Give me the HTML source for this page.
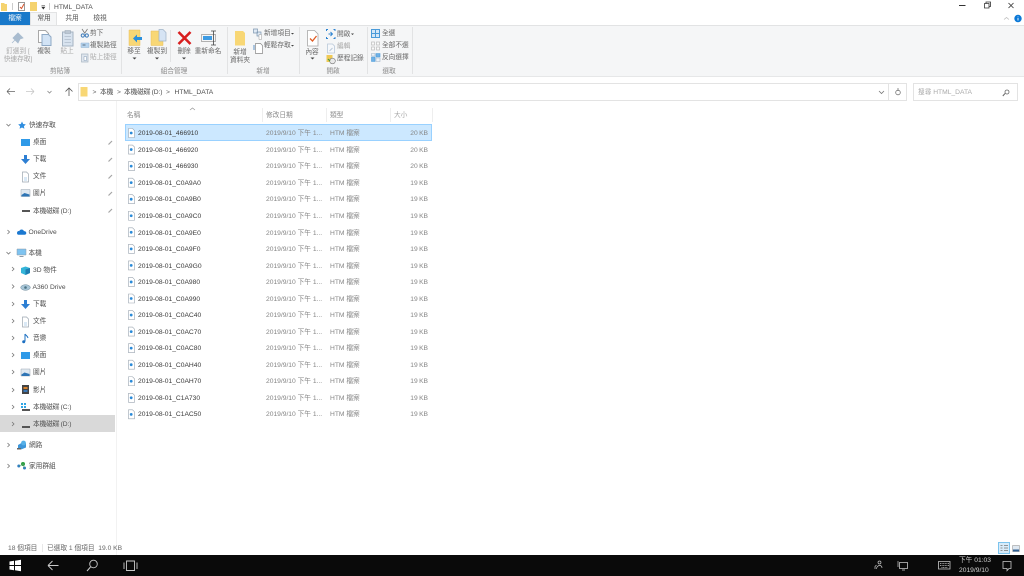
<!DOCTYPE html>
<html lang="zh-Hant"><head><meta charset="utf-8"><title>HTML_DATA</title>
<style>
html,body{margin:0;padding:0;background:#fff}
#p{position:relative;width:1024px;height:576px;overflow:hidden;background:#fff;font-family:"Liberation Sans","Noto Sans CJK TC",sans-serif;font-size:6.7px;color:#333;filter:blur(.3px)}
#p div{position:absolute}
.t{white-space:nowrap;line-height:10px;height:10px;margin-top:1px}
.c{transform:translateX(-50%)}
.g{color:#8a8a8a}
.m{color:#666}
.l{color:#a9a9a9}
.f{left:138px;color:#3a3a3a}
.d{left:266px;color:#858585}
.y{left:330px;color:#858585}
.s{left:398px;width:30px;text-align:right;color:#858585;word-spacing:-.5px}
.n{color:#4d4d4d}
.w{word-spacing:-.5px;letter-spacing:-.1px}
svg{position:absolute;overflow:visible}
</style></head><body><div id="p">

<!-- title bar -->
<svg style="left:0;top:0" width="60" height="12"><path d="M1 3h3l1 1h2v7H1z" fill="#f5d36f"/><path d="M12.500 3v7" stroke="#ccc"/><path d="M18.500 2.500h6v8h-6z" fill="#fff" stroke="#999"/><path d="M20 7l1.500 1.500L24 4" stroke="#d9552c" fill="none"/><path d="M30 2h7v9h-7z" fill="#f5d36f"/><path d="M41.500 5.500h3.500M41.800 7l1.500 2 1.500-2z" fill="#333" stroke="#333" stroke-width=".6"/><path d="M49.500 3v7" stroke="#ccc"/></svg>
<div class="t n" style="left:54px;top:1.500px">HTML_DATA</div>
<svg style="left:950px;top:0" width="74" height="12"><path d="M9 5.500h6.500" stroke="#333"/><path d="M34.500 3.500h4.500v4.500h-4.500zM36 3.500v-1.500h4.500v4.500h-1.500" fill="none" stroke="#333" stroke-width=".8"/><path d="M58.500 3l5 5M63.500 3l-5 5" stroke="#333" stroke-width=".8"/></svg>

<!-- tabs -->
<div style="left:0;top:12px;width:30px;height:13px;background:#1979ca"></div>
<div class="t c" style="left:15px;top:13px;color:#fff">檔案</div>
<div style="left:30px;top:12px;width:27px;height:14px;background:#f5f6f7;border:1px solid #e2e3e4;border-bottom:0;box-sizing:border-box"></div>
<div class="t c n" style="left:44px;top:13px">常用</div>
<div class="t c" style="left:72px;top:13px;color:#555">共用</div>
<div class="t c" style="left:100px;top:13px;color:#555">檢視</div>
<svg style="left:1000px;top:13px" width="22" height="10"><path d="M4 6.500l2.500-2L9 6.500" stroke="#bbb" fill="none" stroke-width=".8"/><circle cx="18" cy="5.500" r="3.700" fill="#0a78d7"/><path d="M18 3.500v.8M18 5V7.500" stroke="#fff" stroke-width=".9"/></svg>

<!-- ribbon -->
<div style="left:0;top:25px;width:1024px;height:52px;background:#f5f6f7;border-top:1px solid #e2e3e4;border-bottom:1px solid #e6e7e8;box-sizing:border-box"></div>
<div style="left:121px;top:27px;width:1px;height:47px;background:#e2e3e4"></div>
<div style="left:227px;top:27px;width:1px;height:47px;background:#e2e3e4"></div>
<div style="left:299px;top:27px;width:1px;height:47px;background:#e2e3e4"></div>
<div style="left:367px;top:27px;width:1px;height:47px;background:#e2e3e4"></div>
<div style="left:412px;top:27px;width:1px;height:47px;background:#e2e3e4"></div>
<div style="left:170px;top:30px;width:1px;height:32px;background:#e2e3e4"></div>

<svg style="left:0;top:25px" width="420" height="50">
<!-- pin -->
<path d="M13 13l5-5 5 5-3 1-2 4-4-4zM15 15l-3 3" fill="#a9bccf" stroke="#a9bccf" stroke-width=".8"/>
<!-- copy -->
<path d="M38.500 5.500h7l3 3v9h-10z" fill="#fff" stroke="#a8a8a8"/><path d="M42 9.500h6.500l2.500 2.500v8.500H42z" fill="#d2e3f5" stroke="#8fa9c5"/>
<!-- paste -->
<path d="M62.500 7h10.500v14H62.500z" fill="#d8e3ef" stroke="#a5b3c2"/><path d="M65 5.500h5.500v3H65z" fill="#bcc7d3" stroke="#9aa7b5" stroke-width=".6"/><path d="M64.500 11.500h6.500M64.500 14.500h6.500M64.500 17.500h6.500" stroke="#b0bdcb" stroke-width=".8"/>
<!-- small clipboard items -->
<path d="M82 4l3 4.500M87.500 4l-3 4.500" stroke="#777" stroke-width=".8"/><circle cx="82.800" cy="10.500" r="1.600" fill="none" stroke="#3a78b8"/><circle cx="86.800" cy="10.500" r="1.600" fill="none" stroke="#3a78b8"/>
<path d="M81 18h8v4.500h-8z" fill="#b5d3ee" stroke="#8fb1d0" stroke-width=".5"/><path d="M82.500 20h3" stroke="#345" stroke-width=".7"/>
<path d="M81.500 29h6.500v8h-6.500z" fill="#dfe6ee" stroke="#a9b6c3" stroke-width=".7"/><path d="M84 31.500h2.500v4H84z" fill="#fff" stroke="#8199b3" stroke-width=".5"/>
<!-- move -->
<path d="M129 5h11v15.500h-11z" fill="#f8d775" stroke="#e7be5a" stroke-width=".5"/><path d="M133 13.500l4-4v2.500h5v3h-5v2.500z" fill="#2b8fdc"/>
<!-- copy to -->
<path d="M151 6h12v14.500h-12z" fill="#f8d775" stroke="#e7be5a" stroke-width=".5"/><path d="M159 4.500h4l3 3v8.500h-7z" fill="#d6e4f4" stroke="#9fb2c6" stroke-width=".7"/>
<!-- delete -->
<path d="M178.500 7l12 12M190.500 7l-12 12" stroke="#d81e1e" stroke-width="2.600"/>
<!-- rename -->
<path d="M201.500 9.500h14v7h-14z" fill="#f5f6f7" stroke="#999" stroke-width=".7"/><path d="M203 11h9v4h-9z" fill="#3d9be3"/><path d="M211 6h5M213.500 6v14M211 20h5" stroke="#444" stroke-width=".8" fill="none"/>
<!-- new folder -->
<path d="M235 6h8l2 2v12.500l-10 0z" fill="#f8d775"/>
<!-- new item / easy access -->
<path d="M253.500 4h4v4h-4zM257 7h4v4h-4z" fill="#dfe9f4" stroke="#7d96b0" stroke-width=".7"/><path d="M259 9.500h2.500v5H259z" fill="#fff" stroke="#999" stroke-width=".5"/>
<path d="M255.500 18.500h5l2 2v8h-7z" fill="#fff" stroke="#888" stroke-width=".7"/><path d="M254 20v5" stroke="#3a78b8" stroke-width=".8"/>
<!-- properties -->
<path d="M307.500 5.500h7l3.500 3.500V21h-10.500z" fill="#fff" stroke="#a8a8a8" stroke-width=".8"/><path d="M310 13.500l2.500 2.500 4-5" stroke="#e05c25" stroke-width="1.300" fill="none"/>
<!-- open -->
<path d="M326.500 6v-1.500h1.500M326.500 12v1.500h1.500M333.500 4.500h1.500v1.500M333.500 13.500h1.500v-1.500" stroke="#2d83d0" fill="none"/><path d="M328.500 9h4M330.500 7l2 2-2 2" stroke="#2d83d0" stroke-width=".9" fill="none"/>
<path d="M327.500 19h5l2 2v7h-7z" fill="#f6f8fb" stroke="#b9c8d9" stroke-width=".8"/><path d="M329.500 26l3-3" stroke="#b9c8d9"/>
<path d="M326.500 30h6v7h-6z" fill="#efc956"/><circle cx="332.500" cy="36" r="2.800" fill="#e9e9e9" stroke="#777" stroke-width=".6"/><path d="M328 34l2 2" stroke="#4a9c3a" stroke-width="1.200"/>
<!-- select -->
<path d="M371.500 4.500h8v8h-8z" fill="#d5e7f7" stroke="#4b9bd9"/><path d="M375.500 4.500v8M371.500 8.500h8" stroke="#4b9bd9"/>
<path d="M371.500 17h3v3h-3zM376.500 17h3v3h-3zM371.500 22h3v3h-3zM376.500 22h3v3h-3z" fill="#fafafa" stroke="#bdbdbd" stroke-width=".7"/>
<path d="M371.500 32h3.500v4.500h-3.500z" fill="#6fb1e6" stroke="#4b9bd9" stroke-width=".6"/><path d="M376 28.500h4v3.500h-4z" fill="#6fb1e6" stroke="#4b9bd9" stroke-width=".6"/><path d="M376 33h4v3.500h-4zM371.500 28.500h3.500V31h-3.500z" fill="#eef3f8" stroke="#9fb2c6" stroke-width=".6"/>
<!-- little arrows -->
<path d="M132.500 32.500h4l-2 2zM155 32.500h4l-2 2zM182 32.500h4l-2 2zM310.500 32.500h4l-2 2zM291 8h3l-1.500 1.500zM291 20h3l-1.500 1.500zM351 8.500h3l-1.500 1.500z" fill="#444"/>
</svg>

<div class="t c l" style="left:18px;top:46px">釘選到 [</div>
<div class="t c l" style="left:18px;top:54px">快速存取]</div>
<div class="t c m" style="left:44px;top:46px">複製</div>
<div class="t c l" style="left:67px;top:46px">貼上</div>
<div class="t m" style="left:90px;top:28px">剪下</div>
<div class="t m" style="left:90px;top:40px">複製路徑</div>
<div class="t l" style="left:90px;top:52px">貼上捷徑</div>
<div class="t c g" style="left:60px;top:66px">剪貼簿</div>
<div class="t c m" style="left:134px;top:46px">移至</div>
<div class="t c m" style="left:157px;top:46px">複製到</div>
<div class="t c m" style="left:184px;top:46px">刪除</div>
<div class="t c m" style="left:208px;top:46px">重新命名</div>
<div class="t c g" style="left:174px;top:66px">組合管理</div>
<div class="t c m" style="left:240px;top:47px">新增</div>
<div class="t c m" style="left:240px;top:55px">資料夾</div>
<div class="t m" style="left:264px;top:28px">新增項目</div>
<div class="t m" style="left:264px;top:40px">輕鬆存取</div>
<div class="t c g" style="left:263px;top:66px">新增</div>
<div class="t c m" style="left:312px;top:47px">內容</div>
<div class="t m" style="left:337px;top:29px">開啟</div>
<div class="t l" style="left:337px;top:41px">編輯</div>
<div class="t m" style="left:337px;top:53px">歷程記錄</div>
<div class="t c g" style="left:333px;top:66px">開啟</div>
<div class="t m" style="left:382px;top:28px">全選</div>
<div class="t m" style="left:382px;top:40px">全部不選</div>
<div class="t m" style="left:382px;top:52px">反向選擇</div>
<div class="t c g" style="left:389px;top:66px">選取</div>

<!-- address bar -->
<svg style="left:0;top:83px" width="90" height="17"><path d="M7 8.500h8M7 8.500l3-3M7 8.500l3 3" stroke="#666" fill="none" stroke-width=".8"/><path d="M26 8.500h8M34 8.500l-3-3M34 8.500l-3 3" stroke="#c6c6c6" fill="none" stroke-width=".8"/><path d="M47.500 8l2 2 2-2" stroke="#888" fill="none" stroke-width=".8"/><path d="M69 13V5M65.500 8.500L69 5l3.500 3.500" stroke="#555" fill="none" stroke-width=".8"/><path d="M80.500 4h7v9.500h-7z" fill="#f8d775"/></svg>
<div style="left:78px;top:83px;width:829px;height:18px;border:1px solid #e3e3e3;box-sizing:border-box"></div>
<div style="left:888px;top:84px;width:1px;height:16px;background:#e3e3e3"></div>
<div style="left:913px;top:83px;width:105px;height:18px;border:1px solid #e3e3e3;box-sizing:border-box"></div>
<div class="t m" style="left:92.500px;top:87px">&gt;</div>
<div class="t n" style="left:100px;top:87px">本機</div>
<div class="t m" style="left:117px;top:87px">&gt;</div>
<div class="t n w" style="left:124px;top:87px">本機磁碟 (D:)</div>
<div class="t m" style="left:166px;top:87px">&gt;</div>
<div class="t n" style="left:174.500px;top:87px">HTML_DATA</div>
<svg style="left:878px;top:83px" width="140" height="17"><path d="M1 8l2.500 2.500L6 8" stroke="#777" fill="none" stroke-width=".8"/><circle cx="20" cy="9.500" r="2.300" fill="none" stroke="#777" stroke-width=".8"/><path d="M20 5v3" stroke="#777" stroke-width=".8"/><path d="M127 10.500l-2.200 2.500" stroke="#666" stroke-width="1"/><circle cx="129" cy="9" r="2" fill="none" stroke="#666" stroke-width=".8"/></svg>
<div class="t l" style="left:918px;top:87px">搜尋 HTML_DATA</div>

<!-- sidebar -->
<div style="left:116px;top:101px;width:1px;height:454px;background:#f2f2f2"></div>
<div style="left:0;top:415px;width:115px;height:17px;background:#d9d9d9"></div>
<svg style="left:0;top:115px" width="116" height="360">
<g fill="none" stroke="#777" stroke-width=".8">
<path d="M6.500 9l2 2 2-2M6.500 137l2 2 2-2"/>
<path d="M7.500 115l2 2-2 2M12 152l2 2-2 2M12 169.500l2 2-2 2M12 187l2 2-2 2M12 204l2 2-2 2M12 221l2 2-2 2M12 238l2 2-2 2M12 255l2 2-2 2M12 273l2 2-2 2M12 290l2 2-2 2M12 307l2 2-2 2M7.500 328l2 2-2 2M7.500 349l2 2-2 2"/>
</g>
<path d="M22 6.500l1.200 2.500 2.600.4-1.900 1.800.5 2.600-2.400-1.300-2.400 1.300.5-2.600-1.900-1.800 2.600-.4z" fill="#2f8ee0"/>
<!-- pins -->
<g stroke="#a5a5a5" stroke-width="1.200" fill="none"><path d="M110 28l2-2M110 28l-1.500 1.500M110 45l2-2M110 45l-1.500 1.500M110 62l2-2M110 62l-1.500 1.500M110 79l2-2M110 79l-1.500 1.500M110 96l2-2M110 96l-1.500 1.500"/></g>
<!-- desktop -->
<path d="M21 24h9v7h-9zM21 237h9v7h-9z" fill="#2f9ae8"/>
<!-- download -->
<path d="M24 40h3v4h3l-4.500 5-4.500-5h3zM24 185h3v4h3l-4.500 5-4.500-5h3z" fill="#2d7fd3"/>
<!-- docs -->
<path d="M22.500 57h4l2 2v8h-6zM22.500 202h4l2 2v8h-6z" fill="#fff" stroke="#9aa5b0" stroke-width=".7"/><path d="M24 63h3M24 65h3M24 208h3M24 210h3" stroke="#6fa8dc" stroke-width=".6"/>
<!-- pictures -->
<path d="M21 74.500h9v7h-9zM21 254h9v7h-9z" fill="#dfe8f1" stroke="#9aa5b0" stroke-width=".5"/><path d="M21.500 80l3-2 5 1.500v2h-8zM21.500 259.500l3-2 5 1.500v2h-8z" fill="#2f75b5"/>
<!-- drives -->
<path d="M22 95h8v2h-8zM22 311h8v2h-8z" fill="#555"/>
<path d="M21 288h2v2h-2zM24 288h2v2h-2zM21 291h2v2h-2zM24 291h2v2h-2z" fill="#2fa6e6"/><path d="M22 294h8v2h-8z" fill="#555"/>
<!-- onedrive -->
<path d="M17 118c0-1.700 1.400-2.300 2.300-1.900.6-2 3.900-2.200 4.600 0 1.500-.2 2.400.8 2.400 1.900s-.7 1.800-1.700 1.800h-6.200c-.8 0-1.400-.8-1.400-1.800z" fill="#1b78d0"/>
<!-- this pc -->
<path d="M17 134h9v6h-9z" fill="#7ec3f0" stroke="#8d9aa6" stroke-width=".5"/><path d="M19.500 141.500h4" stroke="#8d9aa6"/>
<!-- 3D -->
<path d="M21 153l4.500-1.500L30 153v5l-4.500 2-4.500-2z" fill="#35b5d9"/><path d="M25.500 154.500V160l4.500-2v-5z" fill="#1d7fb3"/>
<!-- A360 -->
<ellipse cx="25.500" cy="172.500" rx="4.800" ry="2.800" fill="#a8c6d8" stroke="#6f8b9b" stroke-width=".5"/><circle cx="25.500" cy="172.500" r="1.300" fill="#4a7284"/>
<!-- music -->
<path d="M25 219v7.500M25 219c1 1.500 2.500 2 3 4" stroke="#1b6fc2" fill="none"/><circle cx="23.700" cy="226.700" r="1.500" fill="#1b6fc2"/>
<!-- video -->
<path d="M22 270h7v9h-7z" fill="#444"/><path d="M23.500 272h4v2h-4z" fill="#d9822b"/><path d="M23.500 275h4v2h-4z" fill="#3a78b8"/>
<!-- network -->
<path d="M18 330l6-3.500 2 2v4l-5 2-3-1.500z" fill="#3d96d9"/><circle cx="23.500" cy="328" r="2.400" fill="#55b0e8"/><path d="M17 333h4v1.500h-4z" fill="#666"/>
<!-- homegroup -->
<circle cx="18.800" cy="351" r="1.500" fill="#2f7dc4"/><circle cx="23" cy="349" r="2" fill="#2ea043"/><circle cx="24.500" cy="353" r="1.500" fill="#2f7dc4"/><path d="M19 351l4-2 1.500 4" stroke="#58a16a" stroke-width=".6" fill="none"/>
</svg>
<div class="t n" style="left:29px;top:120px">快速存取</div>
<div class="t n" style="left:33px;top:137px">桌面</div>
<div class="t n" style="left:33px;top:154px">下載</div>
<div class="t n" style="left:33px;top:171px">文件</div>
<div class="t n" style="left:33px;top:188px">圖片</div>
<div class="t n w" style="left:33px;top:205.500px">本機磁碟 (D:)</div>
<div class="t n" style="left:28.500px;top:227px">OneDrive</div>
<div class="t n" style="left:28.500px;top:248px">本機</div>
<div class="t n" style="left:33px;top:265px">3D 物件</div>
<div class="t n" style="left:32.500px;top:282px">A360 Drive</div>
<div class="t n" style="left:33px;top:299px">下載</div>
<div class="t n" style="left:33px;top:316px">文件</div>
<div class="t n" style="left:33px;top:333px">音樂</div>
<div class="t n" style="left:33px;top:350px">桌面</div>
<div class="t n" style="left:33px;top:367px">圖片</div>
<div class="t n" style="left:33px;top:385px">影片</div>
<div class="t n w" style="left:33px;top:402px">本機磁碟 (C:)</div>
<div class="t n w" style="left:33px;top:419px">本機磁碟 (D:)</div>
<div class="t n" style="left:29px;top:440px">網路</div>
<div class="t n" style="left:29px;top:461px">家用群組</div>

<!-- column headers -->
<svg style="left:125px;top:104px" width="310" height="20"><path d="M65 6l2.500-2L70 6" stroke="#999" fill="none" stroke-width=".7"/><path d="M137.500 4v14M201.500 4v14M265.500 4v14M307.500 4v14" stroke="#eee"/></svg>
<div class="t g" style="left:127px;top:110px">名稱</div>
<div class="t g" style="left:266px;top:110px">修改日期</div>
<div class="t g" style="left:330px;top:110px">類型</div>
<div class="t l" style="left:394px;top:110px">大小</div>

<!-- rows -->
<div style="left:125px;top:124px;width:307px;height:17px;background:#cce8ff;border:1px solid #99d1ff;box-sizing:border-box"></div>
<svg style="left:128px;top:124px" width="8" height="300">
<defs><g id="fi"><path d="M.5 4.500h4l2 2v7h-6z" fill="#fff" stroke="#9aa5b0" stroke-width=".6"/><circle cx="3.200" cy="9" r="1.400" fill="#2a8ad8"/></g></defs>
<use href="#fi"/><use href="#fi" y="16.550"/><use href="#fi" y="33.100"/><use href="#fi" y="49.650"/><use href="#fi" y="66.200"/><use href="#fi" y="82.750"/><use href="#fi" y="99.300"/><use href="#fi" y="115.850"/><use href="#fi" y="132.400"/><use href="#fi" y="148.950"/><use href="#fi" y="165.500"/><use href="#fi" y="182.050"/><use href="#fi" y="198.600"/><use href="#fi" y="215.150"/><use href="#fi" y="231.700"/><use href="#fi" y="248.250"/><use href="#fi" y="264.800"/><use href="#fi" y="281.350"/>
</svg>

<div class="t f" style="top:128px">2019-08-01_466910</div><div class="t d" style="top:128px">2019/9/10 下午 1...</div><div class="t y" style="top:128px">HTM 檔案</div><div class="t s" style="top:128px">20 KB</div>
<div class="t f" style="top:144.500px">2019-08-01_466920</div><div class="t d" style="top:144.500px">2019/9/10 下午 1...</div><div class="t y" style="top:144.500px">HTM 檔案</div><div class="t s" style="top:144.500px">20 KB</div>
<div class="t f" style="top:161px">2019-08-01_466930</div><div class="t d" style="top:161px">2019/9/10 下午 1...</div><div class="t y" style="top:161px">HTM 檔案</div><div class="t s" style="top:161px">20 KB</div>
<div class="t f" style="top:177.500px">2019-08-01_C0A9A0</div><div class="t d" style="top:177.500px">2019/9/10 下午 1...</div><div class="t y" style="top:177.500px">HTM 檔案</div><div class="t s" style="top:177.500px">19 KB</div>
<div class="t f" style="top:194px">2019-08-01_C0A9B0</div><div class="t d" style="top:194px">2019/9/10 下午 1...</div><div class="t y" style="top:194px">HTM 檔案</div><div class="t s" style="top:194px">19 KB</div>
<div class="t f" style="top:211px">2019-08-01_C0A9C0</div><div class="t d" style="top:211px">2019/9/10 下午 1...</div><div class="t y" style="top:211px">HTM 檔案</div><div class="t s" style="top:211px">19 KB</div>
<div class="t f" style="top:227.500px">2019-08-01_C0A9E0</div><div class="t d" style="top:227.500px">2019/9/10 下午 1...</div><div class="t y" style="top:227.500px">HTM 檔案</div><div class="t s" style="top:227.500px">19 KB</div>
<div class="t f" style="top:244px">2019-08-01_C0A9F0</div><div class="t d" style="top:244px">2019/9/10 下午 1...</div><div class="t y" style="top:244px">HTM 檔案</div><div class="t s" style="top:244px">19 KB</div>
<div class="t f" style="top:260.500px">2019-08-01_C0A9G0</div><div class="t d" style="top:260.500px">2019/9/10 下午 1...</div><div class="t y" style="top:260.500px">HTM 檔案</div><div class="t s" style="top:260.500px">19 KB</div>
<div class="t f" style="top:277px">2019-08-01_C0A980</div><div class="t d" style="top:277px">2019/9/10 下午 1...</div><div class="t y" style="top:277px">HTM 檔案</div><div class="t s" style="top:277px">19 KB</div>
<div class="t f" style="top:293.500px">2019-08-01_C0A990</div><div class="t d" style="top:293.500px">2019/9/10 下午 1...</div><div class="t y" style="top:293.500px">HTM 檔案</div><div class="t s" style="top:293.500px">19 KB</div>
<div class="t f" style="top:310px">2019-08-01_C0AC40</div><div class="t d" style="top:310px">2019/9/10 下午 1...</div><div class="t y" style="top:310px">HTM 檔案</div><div class="t s" style="top:310px">19 KB</div>
<div class="t f" style="top:326.500px">2019-08-01_C0AC70</div><div class="t d" style="top:326.500px">2019/9/10 下午 1...</div><div class="t y" style="top:326.500px">HTM 檔案</div><div class="t s" style="top:326.500px">19 KB</div>
<div class="t f" style="top:343px">2019-08-01_C0AC80</div><div class="t d" style="top:343px">2019/9/10 下午 1...</div><div class="t y" style="top:343px">HTM 檔案</div><div class="t s" style="top:343px">19 KB</div>
<div class="t f" style="top:359.500px">2019-08-01_C0AH40</div><div class="t d" style="top:359.500px">2019/9/10 下午 1...</div><div class="t y" style="top:359.500px">HTM 檔案</div><div class="t s" style="top:359.500px">19 KB</div>
<div class="t f" style="top:376px">2019-08-01_C0AH70</div><div class="t d" style="top:376px">2019/9/10 下午 1...</div><div class="t y" style="top:376px">HTM 檔案</div><div class="t s" style="top:376px">19 KB</div>
<div class="t f" style="top:392.500px">2019-08-01_C1A730</div><div class="t d" style="top:392.500px">2019/9/10 下午 1...</div><div class="t y" style="top:392.500px">HTM 檔案</div><div class="t s" style="top:392.500px">19 KB</div>
<div class="t f" style="top:409px">2019-08-01_C1AC50</div><div class="t d" style="top:409px">2019/9/10 下午 1...</div><div class="t y" style="top:409px">HTM 檔案</div><div class="t s" style="top:409px">19 KB</div>

<!-- status bar -->
<div class="t m" style="left:8px;top:543px">18 個項目</div>
<div class="t m" style="left:47px;top:543px">已選取 1 個項目&nbsp; 19.0 KB</div>
<div style="left:41.500px;top:544px;width:1px;height:8px;background:#e8e8e8"></div>
<div style="left:998px;top:542px;width:12px;height:12px;background:#d8ecfa;border:1px solid #7cc4ee;box-sizing:border-box"></div>
<svg style="left:998px;top:542px" width="26" height="13"><path d="M2.500 3.500h2M2.500 6h2M2.500 8.500h2M6 3.500h4M6 6h4M6 8.500h4" stroke="#777" stroke-width=".8"/><path d="M14.500 3.500h7v6h-7z" fill="#dfe8f1" stroke="#888" stroke-width=".5"/><path d="M15 7.500h6v2h-6z" fill="#2f5f92"/></svg>

<!-- taskbar -->
<div style="left:0;top:555px;width:1024px;height:21px;background:#0a0a0a"></div>
<svg style="left:0;top:555px" width="1024" height="21">
<path d="M9.500 6.500l4.500-.7v4.200H9.500zM15 5.700l6-.9V10h-6zM9.500 11H14v4.200l-4.500-.7zM15 11h6v5.200l-6-.9z" fill="#fff"/>
<path d="M48 10.500h10.500M48 10.500l4.500-4.500M48 10.500l4.500 4.500" stroke="#c9c9c9" fill="none" stroke-width=".9"/>
<circle cx="93.500" cy="9" r="3.800" fill="none" stroke="#c9c9c9" stroke-width=".9"/><path d="M90.500 12l-3.500 4" stroke="#c9c9c9"/>
<path d="M126.500 6h8v9.500h-8z" fill="none" stroke="#c9c9c9" stroke-width=".9"/><path d="M124 7.500v6.500M137 7.500v6.500" stroke="#c9c9c9" stroke-width=".9"/>
<circle cx="879.500" cy="7.500" r="1.500" fill="none" stroke="#c9c9c9" stroke-width=".7"/><path d="M876.500 14c0-2 1.500-3.500 3-3.500s2.500 1 2.500 2.500M875 14v-2.500l1.500-1.500" stroke="#c9c9c9" fill="none" stroke-width=".7"/>
<path d="M899.500 7.500h8v6h-8z" fill="none" stroke="#c9c9c9" stroke-width=".8"/><path d="M898 6v6" stroke="#c9c9c9" stroke-width=".7"/><path d="M902 15h3" stroke="#c9c9c9" stroke-width=".8"/>
<path d="M938.500 6.500h11.500v7.500h-11.500z" fill="none" stroke="#c9c9c9" stroke-width=".8"/><path d="M940 8.500h9M940 10.500h9M941.500 12.500h6" stroke="#c9c9c9" stroke-width=".7" stroke-dasharray="1 .6"/>
<path d="M1003 6.500h8v7h-2l-2 2.200v-2.200h-4z" fill="none" stroke="#c9c9c9" stroke-width=".8"/>
</svg>
<div class="t" style="left:959px;top:554.500px;color:#d4d4d4">下午 01:03</div>
<div class="t" style="left:959px;top:564.500px;color:#d4d4d4">2019/9/10</div>

</div></body></html>
